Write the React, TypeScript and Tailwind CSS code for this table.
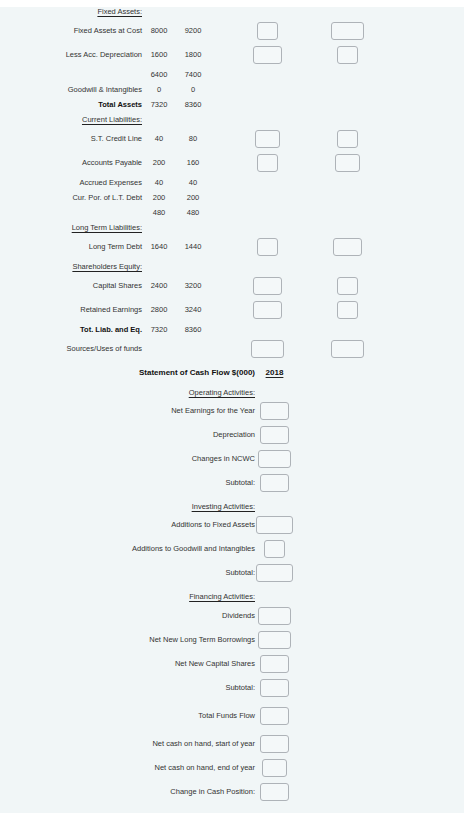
import React from "react";

type TopRow = {
  label?: string;
  bold?: boolean;
  underline?: boolean;
  a?: string;
  b?: string;
  boxes?: [number, number];
  mt: number;
};

type CfRow = {
  label: string;
  underline?: boolean;
  heading?: boolean;
  box?: number;
  mt: number;
};

const MT: Record<number, string> = {
  4: "mt-[4px]",
  5: "mt-[5px]",
  6: "mt-[6px]",
  7: "mt-[7px]",
  10: "mt-[10px]",
};

const W: Record<number, string> = {
  21: "w-[21px]",
  25: "w-[25px]",
  29: "w-[29px]",
  33: "w-[33px]",
  37: "w-[37px]",
};

const top: TopRow[] = [
  { label: "Fixed Assets:", underline: true, mt: 7 },
  { label: "Fixed Assets at Cost", a: "8000", b: "9200", boxes: [21, 33], mt: 5 },
  { label: "Less Acc. Depreciation", a: "1600", b: "1800", boxes: [29, 21], mt: 6 },
  { a: "6400", b: "7400", mt: 6 },
  { label: "Goodwill & Intangibles", a: "0", b: "0", mt: 5 },
  { label: "Total Assets", bold: true, a: "7320", b: "8360", mt: 5 },
  { label: "Current Liabilities:", underline: true, mt: 5 },
  { label: "S.T. Credit Line", a: "40", b: "80", boxes: [25, 21], mt: 5 },
  { label: "Accounts Payable", a: "200", b: "160", boxes: [21, 25], mt: 6 },
  { label: "Accrued Expenses", a: "40", b: "40", mt: 6 },
  { label: "Cur. Por. of L.T. Debt", a: "200", b: "200", mt: 5 },
  { a: "480", b: "480", mt: 5 },
  { label: "Long Term Liabilities:", underline: true, mt: 5 },
  { label: "Long Term Debt", a: "1640", b: "1440", boxes: [21, 29], mt: 5 },
  { label: "Shareholders Equity:", underline: true, mt: 6 },
  { label: "Capital Shares", a: "2400", b: "3200", boxes: [29, 21], mt: 5 },
  { label: "Retained Earnings", a: "2800", b: "3240", boxes: [29, 21], mt: 6 },
  { label: "Tot. Liab. and Eq.", bold: true, a: "7320", b: "8360", mt: 6 },
  { label: "Sources/Uses of funds", boxes: [33, 33], mt: 5 },
];

const cf: CfRow[] = [
  { label: "Operating Activities:", underline: true, mt: 10 },
  { label: "Net Earnings for the Year", box: 29, mt: 4 },
  { label: "Depreciation", box: 29, mt: 6 },
  { label: "Changes in NCWC", box: 33, mt: 6 },
  { label: "Subtotal:", box: 29, mt: 6 },
  { label: "Investing Activities:", underline: true, mt: 10 },
  { label: "Additions to Fixed Assets", box: 37, mt: 4 },
  { label: "Additions to Goodwill and Intangibles", box: 21, mt: 6 },
  { label: "Subtotal:", box: 37, mt: 6 },
  { label: "Financing Activities:", underline: true, mt: 10 },
  { label: "Dividends", box: 33, mt: 5 },
  { label: "Net New Long Term Borrowings", box: 33, mt: 6 },
  { label: "Net New Capital Shares", box: 29, mt: 6 },
  { label: "Subtotal:", box: 29, mt: 6 },
  { label: "Total Funds Flow", box: 29, mt: 10 },
  { label: "Net cash on hand, start of year", box: 29, mt: 10 },
  { label: "Net cash on hand, end of year", box: 25, mt: 6 },
  { label: "Change in Cash Position:", box: 29, mt: 6 },
];

function Box({ w }: { w: number }) {
  return (
    <div
      className={`${W[w]} h-[18px] shrink-0 rounded-[3px] border border-[#aeb3b8] bg-[#f4f8f9]`}
    />
  );
}

function Label({
  text,
  bold,
  underline,
}: {
  text?: string;
  bold?: boolean;
  underline?: boolean;
}) {
  if (!text) return null;
  return (
    <span
      className={
        (bold ? "font-bold text-[#111111] " : "text-[#333333] ") +
        (underline ? "underline decoration-[#222222] underline-offset-[1.5px]" : "")
      }
    >
      {text}
    </span>
  );
}

export default function App() {
  return (
    <div
      className="w-[464px] h-[822px] bg-white"
      style={{ fontFamily: '"Liberation Sans", Arial, sans-serif' }}
    >
      <div className="bg-[#f1f6f7] pb-[12px] text-[7.5px] leading-[10px]">
        {top.map((r, i) => (
          <div
            key={i}
            className={`${MT[r.mt]} flex items-center ${r.boxes ? "h-[18px]" : "h-[10px]"}`}
          >
            <div className="w-[142px] shrink-0 text-right whitespace-nowrap">
              <Label text={r.label} bold={r.bold} underline={r.underline} />
            </div>
            <div className="w-[34px] shrink-0 text-center text-[#333333]">{r.a}</div>
            <div className="w-[34px] shrink-0 text-center text-[#333333]">{r.b}</div>
            <div className="w-[114px] shrink-0 flex justify-center">
              {r.boxes && <Box w={r.boxes[0]} />}
            </div>
            <div className="w-[47px] shrink-0 flex justify-center">
              {r.boxes && <Box w={r.boxes[1]} />}
            </div>
          </div>
        ))}

        <div className="mt-[10px] flex h-[10px] items-center text-[8px]">
          <div className="w-[255px] shrink-0 text-right whitespace-nowrap font-bold text-[#111111]">
            Statement of Cash Flow $(000)
          </div>
          <div className="w-[39px] shrink-0 text-center font-bold text-[#111111]">
            <span className="underline decoration-[#222222] underline-offset-[1.5px]">2018</span>
          </div>
        </div>

        {cf.map((r, i) => (
          <div
            key={i}
            className={`${MT[r.mt]} flex items-center ${r.box ? "h-[18px]" : "h-[10px]"}`}
          >
            <div className="w-[255px] shrink-0 text-right whitespace-nowrap">
              <Label text={r.label} underline={r.underline} />
            </div>
            <div className="w-[39px] shrink-0 flex justify-center">
              {r.box && <Box w={r.box} />}
            </div>
          </div>
        ))}
      </div>
    </div>
  );
}
